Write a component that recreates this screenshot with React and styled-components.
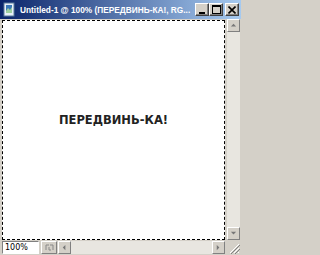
import styled, { createGlobalStyle } from "styled-components";

const Global = createGlobalStyle`
  html, body { margin: 0; padding: 0; background: #d4d0c8; }
`;

const Window = styled.div`
  width: 241px;
  height: 255px;
  display: flex;
  flex-direction: column;
  background: #d4d0c8;
  box-sizing: border-box;
  overflow: hidden;
`;

const TitleBar = styled.div`
  height: 19px;
  display: flex;
  align-items: center;
  gap: 3px;
  padding: 0 2px 0 2px;
  background: linear-gradient(to right, #0a246a, #a6caf0);
  flex-shrink: 0;
`;

const Title = styled.span`
  flex: 1;
  min-width: 0;
  color: #fff;
  font-family: "Liberation Sans", sans-serif;
  font-weight: bold;
  font-size: 8.3px;
  white-space: nowrap;
`;

const Buttons = styled.div`
  display: flex;
  flex-shrink: 0;
`;

const CapButton = styled.div`
  width: 12px;
  height: 11px;
  background: #d4d0c8;
  border: 1px solid;
  border-color: #fff #404040 #404040 #fff;
  box-shadow: inset -1px -1px 0 #808080;
  display: flex;
  align-items: center;
  justify-content: center;
  margin-left: ${(p) => (p.$gap ? "2px" : "0")};
`;

const Middle = styled.div`
  flex: 1;
  display: flex;
  padding-left: 2px;
  min-height: 0;
`;

const Canvas = styled.div`
  flex: 1;
  margin: 1px 2px 0 0;
  background: #fff;
  border: 1px dashed #000;
  display: flex;
  align-items: center;
  justify-content: center;
`;

const Caption = styled.div`
  font-family: "DejaVu Sans", sans-serif;
  font-size: 11.5px;
  font-weight: bold;
  color: #222;
  margin-bottom: 20px;
`;

const VScroll = styled.div`
  width: 13px;
  display: flex;
  flex-direction: column;
  justify-content: space-between;
  background: #e8e6e0;
  margin-right: 1px;
`;

const Arrow = styled.div`
  width: 11px;
  height: 11px;
  background: #d4d0c8;
  border: 1px solid;
  border-color: #fff #808080 #808080 #fff;
  display: flex;
  align-items: center;
  justify-content: center;
  flex-shrink: 0;
`;

const StatusRow = styled.div`
  height: 14px;
  display: flex;
  align-items: center;
  padding: 0 1px 1px 2px;
  flex-shrink: 0;
`;

const ZoomField = styled.div`
  width: 33px;
  height: 11px;
  background: #fff;
  border: 1px solid;
  border-color: #808080 #fff #fff #808080;
  font-family: "DejaVu Sans", sans-serif;
  font-size: 8px;
  line-height: 11px;
  padding-left: 2px;
  color: #000;
`;

const NavButton = styled.div`
  width: 14px;
  height: 11px;
  margin-left: 2px;
  background: #d4d0c8;
  border: 1px solid;
  border-color: #fff #808080 #808080 #fff;
  display: flex;
  align-items: center;
  justify-content: center;
`;

const HScroll = styled.div`
  flex: 1;
  display: flex;
  justify-content: space-between;
  margin-left: 1px;
  background: #e8e6e0;
  margin-right: 2px;
`;

const Grip = styled.div`
  width: 13px;
  height: 13px;
  display: flex;
  align-items: flex-end;
  justify-content: flex-end;
`;

function Tri({ dir }) {
  const pts = {
    up: "1,5 4,2 7,5",
    down: "1,2 4,5 7,2",
    left: "5,1 2,4 5,7",
    right: "2,1 5,4 2,7",
  };
  return (
    <svg width="7" height="7" viewBox="0 0 8 8">
      <polygon points={pts[dir]} fill="#777" />
    </svg>
  );
}

export default function App() {
  return (
    <Window>
      <Global />
      <TitleBar>
        <svg width="15" height="15" viewBox="0 0 15 15">
          <rect x="2" y="1" width="10" height="13" fill="#e8f0f8" stroke="#5a7a9a" />
          <rect x="4" y="3" width="6" height="8" fill="#3a78b8" />
          <path d="M4 9 L6 6 L8 8 L10 5 L10 11 L4 11 Z" fill="#9fd0a0" />
        </svg>
        <Title>Untitled-1 @ 100% (ПЕРЕДВИНЬ-КА!, RG...</Title>
        <Buttons>
          <CapButton>
            <svg width="8" height="8" viewBox="0 0 8 8">
              <rect x="1" y="6" width="6" height="2" fill="#000" />
            </svg>
          </CapButton>
          <CapButton>
            <svg width="9" height="9" viewBox="0 0 9 9">
              <rect x="0.5" y="0.5" width="8" height="8" fill="none" stroke="#000" />
              <rect x="0" y="0" width="9" height="2" fill="#000" />
            </svg>
          </CapButton>
          <CapButton $gap>
            <svg width="8" height="8" viewBox="0 0 8 8">
              <path d="M0.5 0.5 L7.5 7.5 M7.5 0.5 L0.5 7.5" stroke="#000" strokeWidth="1.6" />
            </svg>
          </CapButton>
        </Buttons>
      </TitleBar>
      <Middle>
        <Canvas>
          <Caption>ПЕРЕДВИНЬ-КА!</Caption>
        </Canvas>
        <VScroll>
          <Arrow><Tri dir="up" /></Arrow>
          <Arrow><Tri dir="down" /></Arrow>
        </VScroll>
      </Middle>
      <StatusRow>
        <ZoomField>100%</ZoomField>
        <NavButton>
          <svg width="9" height="7" viewBox="0 0 9 7">
            <path d="M1 6 L1 1 L4 1 M5 1 L8 1 L8 6 M4 3 L4 6 L6 6" stroke="#888" fill="none" />
          </svg>
        </NavButton>
        <HScroll>
          <Arrow><Tri dir="left" /></Arrow>
          <Arrow><Tri dir="right" /></Arrow>
        </HScroll>
        <Grip>
          <svg width="12" height="12" viewBox="0 0 12 12">
            <path d="M11 2 L2 11 M11 6 L6 11 M11 10 L10 11" stroke="#fff" />
            <path d="M12 3 L3 12 M12 7 L7 12" stroke="#808080" />
          </svg>
        </Grip>
      </StatusRow>
    </Window>
  );
}
